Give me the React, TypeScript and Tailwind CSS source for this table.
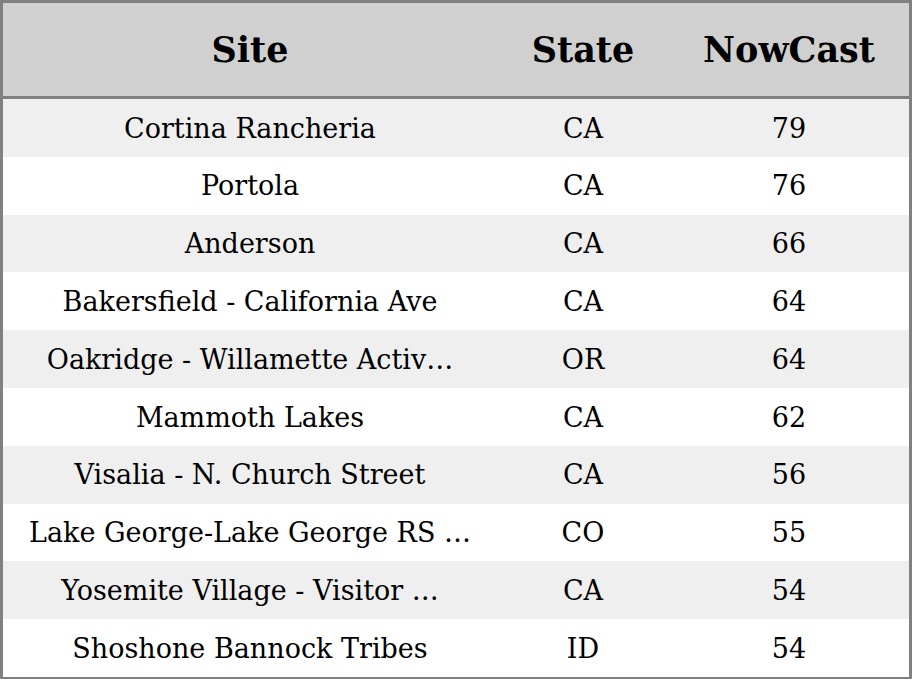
const rows: [string, string, number][] = [
  ["Cortina Rancheria", "CA", 79],
  ["Portola", "CA", 76],
  ["Anderson", "CA", 66],
  ["Bakersfield - California Ave", "CA", 64],
  ["Oakridge - Willamette Activ\u2026", "OR", 64],
  ["Mammoth Lakes", "CA", 62],
  ["Visalia - N. Church Street", "CA", 56],
  ["Lake George-Lake George RS \u2026", "CO", 55],
  ["Yosemite Village - Visitor \u2026", "CA", 54],
  ["Shoshone Bannock Tribes", "ID", 54],
];

export default function App() {
  return (
    <div className="w-[912px] h-[679px] bg-white font-['DejaVu_Serif',serif] text-black">
      <div className="h-full border-[3px] border-b-2 border-[#808080] flex flex-col">
        <div className="h-[96px] shrink-0 bg-[#d0d0d0] border-b-[3px] border-[#808080] flex items-center pt-[2px] text-[35px] font-bold">
          <div className="w-[494px] text-center">Site</div>
          <div className="w-[172px] text-center">State</div>
          <div className="flex-1 text-center">NowCast</div>
        </div>
        {rows.map(([site, state, val], i) => (
          <div
            key={i}
            className={`h-[57.8px] shrink-0 flex items-center pt-[2px] text-[27px] ${i % 2 === 0 ? "bg-[#efefef]" : "bg-white"}`}
          >
            <div className="w-[494px] text-center whitespace-nowrap">{site}</div>
            <div className="w-[172px] text-center">{state}</div>
            <div className="flex-1 text-center">{val}</div>
          </div>
        ))}
      </div>
    </div>
  );
}
